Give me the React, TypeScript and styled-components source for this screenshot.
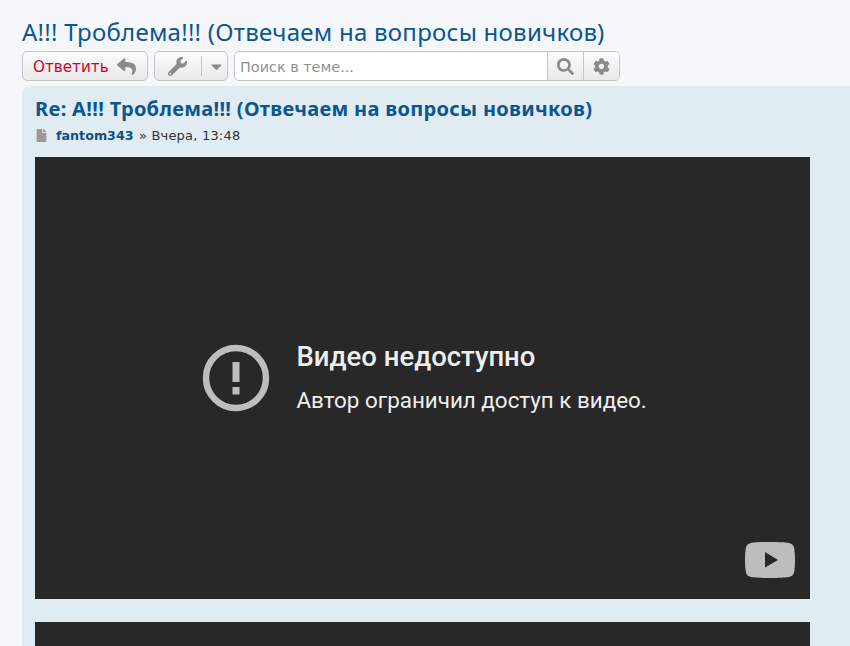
import React from 'react';
import styled, { createGlobalStyle } from 'styled-components';
import { FaCaretDown, FaCog, FaFile, FaReply, FaSearch, FaWrench } from 'react-icons/fa';

const GlobalStyle = createGlobalStyle`
  html, body {
    margin: 0;
    height: 100%;
    overflow: hidden;
    background: #f5f7fb;
  }
`;

const Page = styled.div`
  height: 646px;
  overflow: hidden;
  padding: 16px 0 0 22px;
  box-sizing: border-box;
`;

const Title = styled.h1`
  margin: 0;
  font: 400 24px/32px 'Noto Sans', sans-serif;
  letter-spacing: 0.26px;
  color: #0a5690;
`;

const Toolbar = styled.div`
  display: flex;
  gap: 6px;
  margin-top: 3px;
  height: 30px;
`;

const ToolButton = styled.button`
  display: flex;
  align-items: center;
  box-sizing: border-box;
  height: 30px;
  padding: 0;
  border: 1px solid #c5c5c5;
  border-radius: 5px;
  background: linear-gradient(#fbfbfb, #e9e9e9);
  color: #8a8a8a;
`;

const ReplyLabel = styled.span`
  padding-top: 2px;
`;

const ReplyButton = styled(ToolButton)`
  width: 126px;
  padding-left: 10px;
  gap: 8px;
  font: 15.2px 'DejaVu Sans', sans-serif;
  color: #d5002c;
`;

const ToolsButton = styled(ToolButton)`
  width: 74px;
  padding-left: 13px;
`;

const Divider = styled.span`
  width: 1px;
  height: 20px;
  margin: 0 6px 0 14px;
  background: #c5c5c5;
`;

const SearchBox = styled.div`
  display: flex;
  box-sizing: border-box;
  width: 386px;
  height: 30px;
  border: 1px solid #c5c5c5;
  border-radius: 5px;
  background: #fff;
  overflow: hidden;
`;

const SearchInput = styled.input`
  flex: 1;
  min-width: 0;
  border: 0;
  padding: 2px 5px 0;
  outline: 0;
  background: transparent;
  font: 14.4px 'DejaVu Sans', sans-serif;
  &::placeholder {
    color: #8f8f8f;
    opacity: 1;
  }
`;

const SearchAction = styled.span`
  display: flex;
  align-items: center;
  justify-content: center;
  box-sizing: border-box;
  width: 36px;
  border-left: 1px solid #c5c5c5;
  background: linear-gradient(#fbfbfb, #e9e9e9);
  color: #8a8a8a;
`;

const Post = styled.section`
  margin-top: 5px;
  height: 560px;
  padding: 11px 0 0 13px;
  box-sizing: border-box;
  overflow: hidden;
  border-radius: 8px 0 0 0;
  background: #e0ebf2;
`;

const PostTitle = styled.h2`
  margin: 0;
  font: 700 20px/24px 'Noto Sans', sans-serif;
  letter-spacing: 0.31px;
  color: #0a5690;
`;

const Meta = styled.div`
  display: flex;
  align-items: center;
  margin-top: 5px;
  height: 18px;
  font: 13px 'DejaVu Sans', sans-serif;
  letter-spacing: 0.2px;
  white-space: pre;
  color: #333;
`;

const PostIcon = styled(FaFile)`
  width: 11px;
  height: 13px;
  margin: 0 9px 0 1px;
  color: #999;
`;

const Author = styled.b`
  margin-right: 1px;
  font-size: 12.7px;
  letter-spacing: 0;
  color: #124f7e;
`;

const Video = styled.div`
  display: flex;
  align-items: center;
  position: relative;
  flex: none;
  width: 775px;
  height: 442px;
  margin-top: 13px;
  padding: 0 0 0 167px;
  box-sizing: border-box;
  background: #282828;
  & + & {
    margin-top: 23px;
  }
`;

const Message = styled.div`
  margin: 0 0 3px 26.5px;
  font-family: Roboto, sans-serif;
  color: #eee;
`;

const MessageTitle = styled.div`
  font-size: 27.5px;
  font-weight: 500;
  line-height: 32px;
`;

const MessageText = styled.div`
  margin-top: 14px;
  font-size: 22.4px;
  line-height: 26px;
`;

const YoutubeMark = styled.svg`
  position: absolute;
  right: 15px;
  bottom: 21px;
  width: 50px;
  height: 36px;
`;

const VideoBlock = ({ empty }: { empty?: boolean }) => (
  <Video>
    {!empty && (
      <>
        <svg width="68" height="68" viewBox="0 0 68 68">
          <circle cx="34" cy="34" r="30" fill="none" stroke="#bdbdbd" strokeWidth="6.5" />
          <rect x="30.5" y="18" width="7" height="20" fill="#bdbdbd" />
          <rect x="30.5" y="43" width="7" height="7.5" fill="#bdbdbd" />
        </svg>
        <Message>
          <MessageTitle>Видео недоступно</MessageTitle>
          <MessageText>Автор ограничил доступ к видео.</MessageText>
        </Message>
        <YoutubeMark viewBox="0 0 50 36">
          <path
            d="M25 0 C33 0 40 0.3 44 1 C47 1.6 48.6 3.4 49.2 6 C49.8 10 50 14 50 18 C50 22 49.8 26 49.2 30 C48.6 32.6 47 34.4 44 35 C40 35.7 33 36 25 36 C17 36 10 35.7 6 35 C3 34.4 1.4 32.6 0.8 30 C0.2 26 0 22 0 18 C0 14 0.2 10 0.8 6 C1.4 3.4 3 1.6 6 1 C10 0.3 17 0 25 0 Z"
            fill="#bdbdbd"
          />
          <path d="M20 10 L33 18 L20 25.5 Z" fill="#282828" />
        </YoutubeMark>
      </>
    )}
  </Video>
);

export default function App() {
  return (
    <Page>
      <GlobalStyle />
      <Title>А!!! Троблема!!! (Отвечаем на вопросы новичков)</Title>
      <Toolbar>
        <ReplyButton>
          <ReplyLabel>Ответить</ReplyLabel>
          <FaReply size={19} color="#8a8a8a" />
        </ReplyButton>
        <ToolsButton>
          <FaWrench size={19} />
          <Divider />
          <FaCaretDown size={17} />
        </ToolsButton>
        <SearchBox>
          <SearchInput placeholder="Поиск в теме..." />
          <SearchAction>
            <FaSearch size={17} />
          </SearchAction>
          <SearchAction>
            <FaCog size={17} />
          </SearchAction>
        </SearchBox>
      </Toolbar>
      <Post>
        <PostTitle>Re: А!!! Троблема!!! (Отвечаем на вопросы новичков)</PostTitle>
        <Meta>
          <PostIcon />
          <Author>fantom343</Author> » Вчера, 13:48
        </Meta>
        <VideoBlock />
        <VideoBlock empty />
      </Post>
    </Page>
  );
}
